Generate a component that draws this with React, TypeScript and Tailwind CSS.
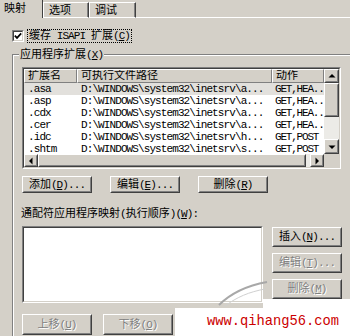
import React from "react";

// "&X" in a label marks the access key (underlined), like a Win32 dialog resource
function Caption({ s }: { s: string }) {
  const runs = s.split(/([\x20-\x7e]+)/).filter(Boolean);
  return (
    <>
      {runs.map((r, i) => {
        if (!/^[\x20-\x7e]+$/.test(r)) return <span key={i}>{r}</span>;
        const bits = r.split(/&(.)/);
        return (
          <span key={i} className="tracking-[-0.9px] whitespace-pre">
            {bits.map((b, j) => (j % 2 ? <u key={j}>{b}</u> : b))}
          </span>
        );
      })}
    </>
  );
}

function Raised({ className = "", children }: { className?: string; children?: React.ReactNode }) {
  return (
    <div className={`border border-t-white border-l-white border-r-[#404040] border-b-[#404040] bg-[#d4d0c8] ${className}`}>
      <div className="h-full w-full border border-t-[#d4d0c8] border-l-[#d4d0c8] border-r-[#808080] border-b-[#808080] flex items-center justify-center">
        {children}
      </div>
    </div>
  );
}

function Sunken({ className = "", inner = "", children }: { className?: string; inner?: string; children?: React.ReactNode }) {
  return (
    <div className={`border border-t-[#808080] border-l-[#808080] border-r-white border-b-white ${className}`}>
      <div className={`h-full w-full border border-t-[#404040] border-l-[#404040] border-r-[#d4d0c8] border-b-[#d4d0c8] ${inner}`}>
        {children}
      </div>
    </div>
  );
}

function Button({ label, disabled, className = "" }: { label: string; disabled?: boolean; className?: string }) {
  return (
    <Raised className={className}>
      <span className={disabled ? "text-[#808080] [text-shadow:1px_1px_0_#fff]" : ""}>
        <Caption s={label} />
      </span>
    </Raised>
  );
}

const arrows = {
  up: "0.5,5.5 4,2 7.5,5.5",
  down: "0.5,2.5 4,6 7.5,2.5",
  left: "5.5,0.5 2,4 5.5,7.5",
  right: "2.5,0.5 6,4 2.5,7.5",
};

function ScrollBtn({ dir, className }: { dir: keyof typeof arrows; className: string }) {
  return (
    <Raised className={className}>
      <svg width="8" height="8" viewBox="0 0 8 8">
        <polygon points={arrows[dir]} fill="#000" />
      </svg>
    </Raised>
  );
}

const rows = [
  [".asa", "D:\\WINDOWS\\system32\\inetsrv\\a...", "GET,HEA.."],
  [".asp", "D:\\WINDOWS\\system32\\inetsrv\\a...", "GET,HEA.."],
  [".cdx", "D:\\WINDOWS\\system32\\inetsrv\\a...", "GET,HEA.."],
  [".cer", "D:\\WINDOWS\\system32\\inetsrv\\a...", "GET,HEA.."],
  [".idc", "D:\\WINDOWS\\system32\\inetsrv\\h...", "GET,POST"],
  [".shtm", "D:\\WINDOWS\\system32\\inetsrv\\s...", "GET,POST"],
];

const cols = ["扩展名", "可执行文件路径", "动作"];
const widths = ["w-[53px]", "w-[195px]", "w-[52px]"];

export default function App() {
  return (
    <div className="relative w-[350px] h-[336px] overflow-hidden bg-[#d4d0c8] text-black text-[11px] leading-[14px] font-['Liberation_Mono','Noto_Sans_CJK_SC',monospace]">
      {/* tabs */}
      <div className="flex items-end h-[18px]">
        <div className="w-[43px] h-full border-r border-r-[#404040] pl-[4px] pt-[2px]">映射</div>
        <div className="w-[46px] h-[16px] border-t border-l border-t-white border-l-white border-r border-r-[#404040] border-b border-b-white pl-[5px] pt-[1px] shadow-[inset_-1px_0_0_#808080]">
          选项
        </div>
        <div className="w-[47px] h-[16px] border-t border-l border-t-white border-l-white border-r border-r-[#404040] border-b border-b-white pl-[5px] pt-[1px] shadow-[inset_-1px_0_0_#808080]">
          调试
        </div>
        <div className="flex-1 h-full border-b border-b-white" />
      </div>

      {/* cache checkbox */}
      <div className="mt-[11px] ml-[12px] flex items-center h-[14px]">
        <Sunken className="w-[12px] h-[12px]" inner="bg-white flex items-center justify-center">
          <svg width="8" height="8" viewBox="0 0 8 8">
            <polyline points="0.8,3.6 3,5.9 7.2,1.4" fill="none" stroke="#000" strokeWidth="1.7" />
          </svg>
        </Sunken>
        <div className="ml-[3px] px-[1px] h-[14px] border border-dotted border-black leading-[12px]">
          <Caption s="缓存 ISAPI 扩展(&C)" />
        </div>
      </div>

      {/* group box */}
      <div className="mt-[11px] ml-[12px] w-[350px] h-[300px] border-t border-l border-[#808080] shadow-[inset_1px_1px_0_#fff]">
        <div className="-mt-[7px] ml-[6px] px-[1px] w-fit bg-[#d4d0c8]">
          <Caption s="应用程序扩展(&X)" />
        </div>

        <Sunken className="mt-[5px] ml-[9px] w-[319px] h-[102px]" inner="bg-white flex flex-col">
          <div className="flex h-[85px]">
            <div className="w-[300px] flex flex-col">
              <div className="flex h-[14px]">
                {cols.map((c, i) => (
                  <div
                    key={c}
                    className={`${widths[i]} h-full border border-t-white border-l-white border-r-[#808080] border-b-[#808080] bg-[#d4d0c8] pl-[3px] leading-[12px] overflow-hidden whitespace-nowrap`}
                  >
                    {c}
                  </div>
                ))}
              </div>
              <div className="h-[71px] overflow-hidden tracking-[-0.9px]">
                {rows.map((r, i) => (
                  <div key={r[0]} className={`flex h-[12px] leading-[12px] whitespace-pre ${i === 0 ? "bg-[#e2e0dc]" : ""}`}>
                    {r.map((cell, j) => (
                      <div key={j} className={`${widths[j]} overflow-hidden ${j === 2 ? "pl-[3px] tracking-[-1.2px]" : "pl-[4px]"}`}>
                        {cell}
                      </div>
                    ))}
                  </div>
                ))}
              </div>
            </div>
            <div className="w-[15px] flex flex-col">
              <ScrollBtn dir="up" className="h-[14px] w-full" />
              <Raised className="h-[34px] w-full" />
              <div className="flex-1 bg-[#ecebe7]" />
              <ScrollBtn dir="down" className="h-[15px] w-full" />
            </div>
          </div>
          <div className="flex h-[13px]">
            <ScrollBtn dir="left" className="w-[14px] h-full" />
            <Raised className="w-[268px] h-full" />
            <div className="w-[4px] bg-[#ecebe7]" />
            <ScrollBtn dir="right" className="w-[14px] h-full" />
            <div className="w-[15px] bg-[#d4d0c8]" />
          </div>
        </Sunken>

        <div className="mt-[7px] ml-[9px] flex gap-[18px]">
          <Button label="添加(&D)..." className="w-[70px] h-[17px]" />
          <Button label="编辑(&E)..." className="w-[70px] h-[17px]" />
          <Button label="删除(&R)" className="w-[70px] h-[17px]" />
        </div>

        <div className="mt-[14px] ml-[8px] h-[14px]">
          <Caption s="通配符应用程序映射(执行顺序)(&W):" />
        </div>

        <div className="mt-[5px] ml-[9px] flex items-start gap-[9px]">
          <Sunken className="w-[241px] h-[77px]" inner="bg-white" />
          <div className="pt-[1px] flex flex-col gap-[6px]">
            <Button label="插入(&N)..." className="w-[70px] h-[20px]" />
            <Button label="编辑(&T)..." disabled className="w-[70px] h-[20px]" />
            <Button label="删除(&M)" disabled className="w-[70px] h-[20px]" />
          </div>
        </div>

        <div className="mt-[11px] ml-[9px] flex gap-[11px]">
          <Button label="上移(&U)" disabled className="w-[70px] h-[21px]" />
          <Button label="下移(&O)" disabled className="w-[70px] h-[21px]" />
        </div>
      </div>

      {/* site watermark */}
      <svg className="absolute left-[175px] top-[280px]" width="175" height="56" viewBox="0 0 175 56">
        <polygon points="0,28 88,28 88,19 175,19 175,56 0,56" fill="#fff" />
        <path d="M44 25 C 56 13, 70 6, 92 2" fill="none" stroke="#a8a8a8" strokeWidth="2" />
        <path d="M50 26 C 62 17, 74 12, 90 9" fill="none" stroke="#d0d0d0" strokeWidth="1" />
      </svg>
      <div className="absolute left-[207px] top-[314px] text-[13.75px] leading-[16px] text-[#cc0000] font-['Liberation_Mono',monospace]">
        www.qihang56.com
      </div>
    </div>
  );
}
